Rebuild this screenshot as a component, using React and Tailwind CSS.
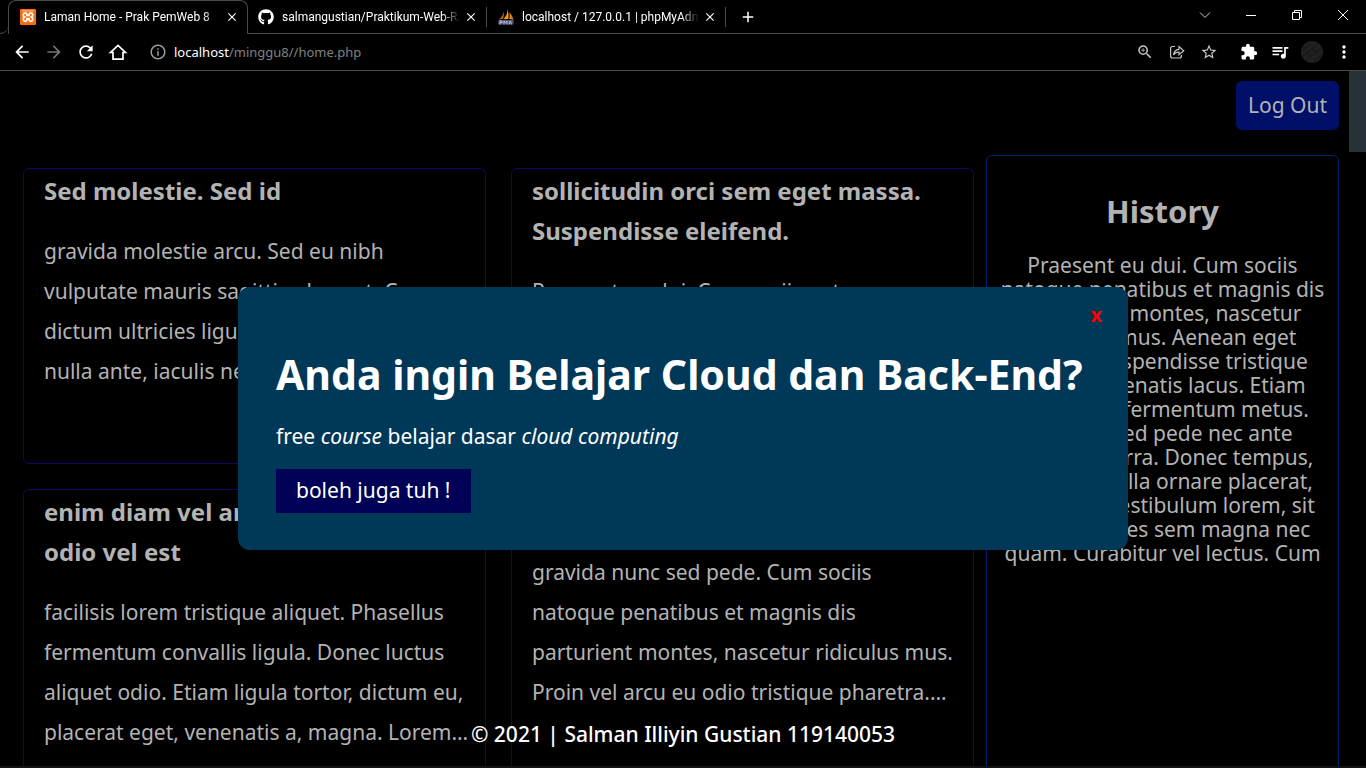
import React from "react";
import {
  MdArrowBack,
  MdArrowForward,
  MdRefresh,
  MdInfoOutline,
  MdZoomIn,
  MdStarBorder,
  MdExtension,
  MdQueueMusic,
  MdMoreVert,
  MdClose,
  MdAdd,
} from "react-icons/md";
import { FaGithub } from "react-icons/fa";

function XamppIcon() {
  return (
    <svg className="size-4 shrink-0" viewBox="0 0 16 16" aria-hidden="true">
      <rect width="16" height="16" rx="1" fill="#fb6d0c" />
      <rect x="2" y="1.500" width="12" height="1" fill="#ffc69b" />
      <path
        d="M5.300 4C2.800 4 2.600 7 4.600 8C2.600 9 2.800 12.300 5.300 12.300C7 12.300 7 10.800 7 9.600H9C9 10.800 9 12.300 10.700 12.300C13.200 12.300 13.400 9 11.400 8C13.400 7 13.200 4 10.700 4C9 4 9 5.400 9 6.400H7C7 5.400 7 4 5.300 4Z"
        fill="none"
        stroke="white"
        strokeWidth="1.700"
      />
    </svg>
  );
}

function PhpMyAdminIcon() {
  return (
    <svg className="size-4 shrink-0" viewBox="0 0 16 16" aria-hidden="true">
      <path d="M5.500 2.500C5.600 5 4 8 .8 10.500L5 9.800C6 7 6.200 4 5.500 2.500Z" fill="#b9651b" />
      <path d="M9.300 0C9.900 4 8 8 5.300 10.200L10.300 10C10.900 6.500 10.600 3 9.300 0Z" fill="#f89c0e" />
      <path d="M11.200 3.500C12 6 11.600 8.400 11 10L15.500 10.700C14.700 7.600 13.200 5 11.200 3.500Z" fill="#d97e14" />
      <path d="M.5 11H15.500L15.500 15.500H.3Z" fill="#50567c" />
      <path d="M2 15.500V12H4V13.700H2M6 15.500V12L7.500 13.700L9 12V15.500M11 15.500L12.300 12L13.600 15.500" fill="none" stroke="#b9bdd6" strokeWidth="1" />
    </svg>
  );
}

function Tab({ icon, title, width }) {
  return (
    <div className={`flex h-8 items-center ${width}`}>
      {icon}
      <span className="ml-2 min-w-0 flex-1 overflow-hidden font-['Roboto','Noto_Sans',sans-serif] text-[12px] leading-4 whitespace-nowrap text-white [mask-image:linear-gradient(to_right,black_90%,transparent)]">
        {title}
      </span>
      <button type="button" aria-label={`Close ${title}`} className="ml-1 shrink-0">
        <MdClose className="size-[14px] text-white" />
      </button>
    </div>
  );
}

function TabStrip() {
  return (
    <div className="flex h-[34px] text-white">
      <div className="w-2 shrink-0 rounded-br-lg border-b border-[#4b4b4b]" />
      <div className="w-[240px] shrink-0 rounded-t-lg border border-b-0 border-[#4b4b4b] pr-2 pl-[11px]">
        <Tab icon={<XamppIcon />} title="Laman Home - Prak PemWeb 8" width="w-full" />
      </div>
      <div className="flex flex-1 items-center border-b border-[#4b4b4b] pl-[10px]">
        <Tab
          icon={<FaGithub className="size-4 shrink-0" />}
          title="salmangustian/Praktikum-Web-RA-119140053"
          width="w-[220px]"
        />
        <div className="ml-2 h-5 w-px bg-[#4b4b4b]" />
        <div className="pl-[11px]">
          <Tab icon={<PhpMyAdminIcon />} title="localhost / 127.0.0.1 | phpMyAdmin 5.1.1" width="w-[219px]" />
        </div>
        <div className="ml-2 h-5 w-px bg-[#4b4b4b]" />
        <button type="button" aria-label="New tab" className="ml-[13px]">
          <MdAdd className="size-[18px]" />
        </button>
        <div className="flex-1" />
        <div className="flex items-center gap-[34px] pr-[17px] pb-1">
          <button type="button" aria-label="Search tabs">
            <svg className="h-3 w-3" viewBox="0 0 12 12" fill="none" stroke="#c8c8c8">
              <path d="M1 3.500L6 8.500L11 3.500" />
            </svg>
          </button>
          <button type="button" aria-label="Minimize">
            <svg className="h-3 w-3" viewBox="0 0 12 12" fill="none" stroke="white">
              <path d="M1 6.500H11" />
            </svg>
          </button>
          <button type="button" aria-label="Restore">
            <svg className="h-3 w-3" viewBox="0 0 12 12" fill="none" stroke="white">
              <path d="M1.500 3.500H8.500V10.500H1.500ZM3.500 3.500V1.500H10.500V8.500H8.500" />
            </svg>
          </button>
          <button type="button" aria-label="Close window">
            <svg className="h-3 w-3" viewBox="0 0 12 12" fill="none" stroke="white">
              <path d="M1 1L11 11M11 1L1 11" />
            </svg>
          </button>
        </div>
      </div>
    </div>
  );
}

function Toolbar() {
  return (
    <div className="flex h-[37px] items-center border-b border-[#4b4b4b] px-3 text-white">
      <div className="flex items-center gap-3">
        <button type="button" aria-label="Back">
          <MdArrowBack className="size-5" />
        </button>
        <button type="button" aria-label="Forward">
          <MdArrowForward className="size-5 text-[#757575]" />
        </button>
        <button type="button" aria-label="Reload">
          <MdRefresh className="size-5" />
        </button>
        <button type="button" aria-label="Home">
          <svg className="size-5" viewBox="0 0 20 20" fill="none" stroke="currentColor" strokeWidth="1.700">
            <path d="M2.600 10.500H5V17.100H15V10.500H17.400L10 3.500Z" />
          </svg>
        </button>
      </div>
      <MdInfoOutline className="ml-[21px] size-[18px] text-[#9a9a9a]" />
      <div className="ml-[7px] flex-1 text-[13px] leading-5 text-[#808080]">
        <span className="text-white">localhost</span>/minggu8//home.php
      </div>
      <div className="flex items-center gap-[14px] text-[#c4c4c4]">
        <button type="button" aria-label="Zoom">
          <MdZoomIn className="size-[18px]" />
        </button>
        <button type="button" aria-label="Share">
          <svg className="size-[18px]" viewBox="0 0 18 18" fill="none" stroke="currentColor" strokeWidth="1.200">
            <path d="M7 3.500H4.600Q2.600 3.500 2.600 5.500V13Q2.600 15 4.600 15H11.400Q13.400 15 13.400 13V12" />
            <path d="M5.500 11.800C6 8.500 8 6.500 11 6.300V3.500L15.700 7.700L11 11.800V9.200C8.500 9.200 6.800 10 5.500 11.800Z" />
          </svg>
        </button>
        <button type="button" aria-label="Bookmark">
          <MdStarBorder className="size-[18px]" />
        </button>
      </div>
      <div className="ml-[22px] flex items-center gap-3 text-white">
        <button type="button" aria-label="Extensions">
          <MdExtension className="size-[18px]" />
        </button>
        <button type="button" aria-label="Media">
          <MdQueueMusic className="size-5" />
        </button>
      </div>
      <button type="button" aria-label="Profile" className="ml-[10px]">
        <svg className="size-6" viewBox="0 0 24 24" fill="none" stroke="#121212">
          <circle cx="12" cy="12" r="11" fill="#212121" stroke="none" />
          <path d="M3 16L18 4M6 20L21 9M13 22L22 15M2 11L10 4M7 13L11 16M12 9L16 12" />
        </svg>
      </button>
      <button type="button" aria-label="Menu" className="ml-[10px]">
        <MdMoreVert className="size-5" />
      </button>
    </div>
  );
}

const posts = [
  {
    title: ["Sed molestie. Sed id"],
    body: [
      "gravida molestie arcu. Sed eu nibh",
      "vulputate mauris sagittis placerat. Cras",
      "dictum ultricies ligula. Nullam enim. Sed",
      "nulla ante, iaculis nec, eleifend non,",
    ],
  },
  {
    title: ["sollicitudin orci sem eget massa.", "Suspendisse eleifend."],
    body: [
      "Praesent eu dui. Cum sociis natoque",
      "penatibus et magnis dis parturient",
      "montes, nascetur ridiculus mus.",
      "Aenean eget magna.",
    ],
  },
  {
    title: ["enim diam vel arcu. Curabitur", "odio vel est"],
    body: [
      "facilisis lorem tristique aliquet. Phasellus",
      "fermentum convallis ligula. Donec luctus",
      "aliquet odio. Etiam ligula tortor, dictum eu,",
      "placerat eget, venenatis a, magna. Lorem…",
    ],
  },
  {
    title: ["tempor diam dictum sapien."],
    body: [
      "gravida nunc sed pede. Cum sociis",
      "natoque penatibus et magnis dis",
      "parturient montes, nascetur ridiculus mus.",
      "Proin vel arcu eu odio tristique pharetra.…",
    ],
  },
];

const history = [
  "Praesent eu dui. Cum sociis",
  "natoque penatibus et magnis dis",
  "parturient montes, nascetur",
  "ridiculus mus. Aenean eget",
  "magna. Suspendisse tristique",
  "neque venenatis lacus. Etiam",
  "bibendum fermentum metus.",
  "Aenean sed pede nec ante",
  "blandit viverra. Donec tempus,",
  "lorem fringilla ornare placerat,",
  "orci lacus vestibulum lorem, sit",
  "amet ultricies sem magna nec",
  "quam. Curabitur vel lectus. Cum",
];

function Lines({ lines }) {
  return lines.map((line) => (
    <span key={line} className="block">
      {line}
    </span>
  ));
}

function Card({ post }) {
  return (
    <article className="min-h-[296px] min-w-0 overflow-hidden rounded-md border border-[#150560] px-5 pt-[2px] pb-8 leading-10 whitespace-nowrap">
      <h2 className="mb-5 text-[24px] leading-10 font-bold">
        <Lines lines={post.title} />
      </h2>
      <p className="text-[21px] leading-10">
        <Lines lines={post.body} />
      </p>
    </article>
  );
}

function Popup() {
  return (
    <div className="absolute inset-0 grid place-items-center">
      <div
        role="dialog"
        aria-labelledby="popup-title"
        className="relative w-[890px] rounded-xl bg-[#003858] px-[38px] pt-14 pb-[37px] text-white"
      >
        <button
          type="button"
          aria-label="Close"
          className="absolute top-4 right-[26px] text-[20px] leading-6 font-bold text-[#ff0000]"
        >
          x
        </button>
        <h1 id="popup-title" className="text-[41px] leading-[62px] font-bold whitespace-nowrap">
          Anda ingin Belajar Cloud dan Back-End?
        </h1>
        <p className="mt-[15px] text-[21px] leading-8">
          free <em>course</em> belajar dasar <em>cloud computing</em>
        </p>
        <button type="button" className="mt-[17px] block h-11 bg-[#000056] px-5 pb-[2px] text-[21px] leading-6">
          boleh juga tuh !
        </button>
      </div>
    </div>
  );
}

export default function App() {
  return (
    <div className="flex h-screen flex-col overflow-hidden bg-black font-['Noto_Sans','Open_Sans',sans-serif]">
      <header className="shrink-0">
        <TabStrip />
        <Toolbar />
      </header>
      <div className="relative flex min-h-0 flex-1 overflow-hidden border-b-2 border-[#141414]">
        <div className="min-w-0 flex-1 pt-[10px] pr-[10px] pl-[23px] text-[#b3b3b3]">
          <nav className="flex justify-end">
            <button type="button" className="h-[49px] rounded-md bg-[#000f68] px-3 text-[21px] text-[#b3b3b3]">
              Log Out
            </button>
          </nav>
          <main className="mt-[25px] flex gap-3">
            <section className="mt-[13px] grid min-w-0 flex-1 grid-cols-2 content-start gap-[25px]">
              {posts.map((post) => (
                <Card key={post.title[0]} post={post} />
              ))}
            </section>
            <aside className="min-h-[900px] w-[353px] shrink-0 rounded-md border border-[#00206b] pt-[35px] text-center">
              <h2 className="text-[31px] leading-10 font-bold">History</h2>
              <p className="mt-[22px] text-[21px] leading-6 whitespace-nowrap">
                <Lines lines={history} />
              </p>
            </aside>
          </main>
        </div>
        <div className="w-[17px] shrink-0">
          <div className="h-[81px] bg-[#263238]" />
        </div>
        <footer className="absolute inset-x-0 bottom-4 text-center text-[21px] leading-8 font-medium text-white">
          © 2021 | Salman Illiyin Gustian 119140053
        </footer>
        <Popup />
      </div>
    </div>
  );
}
